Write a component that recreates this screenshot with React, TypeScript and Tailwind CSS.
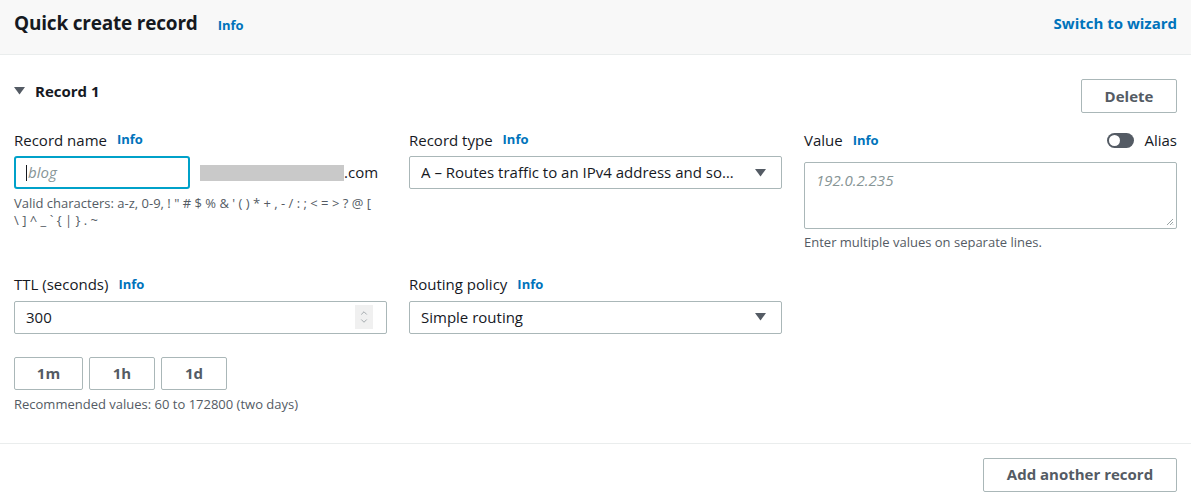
import { ChevronUp, ChevronDown } from 'lucide-react';

function Info() {
  return <span className="ml-[10px] text-[13px] font-bold text-[#0073bb]">Info</span>;
}

function Caret({ className = '' }: { className?: string }) {
  return (
    <svg width="11" height="8" viewBox="0 0 11 8" className={className}>
      <path d="M0 0h11L5.5 7.5z" fill="#545b64" />
    </svg>
  );
}

function Label({ text }: { text: string }) {
  return (
    <div className="flex items-center h-[22px] text-[15px] text-[#16191f]">
      {text}
      <Info />
    </div>
  );
}

function Select({ value }: { value: string }) {
  return (
    <div className="flex items-center justify-between h-[33px] border border-[#aab7b8] rounded-[2px] pl-[11px] pr-[15px] text-[15px] text-[#16191f] bg-white">
      <span className="truncate">{value}</span>
      <Caret className="ml-4 shrink-0" />
    </div>
  );
}

function SmallButton({ label, width }: { label: string; width: string }) {
  return (
    <button className={`${width} h-[33px] border border-[#aab7b8] rounded-[2px] text-[15px] font-bold text-[#545b64] bg-white`}>
      {label}
    </button>
  );
}

export default function App() {
  return (
    <div className="w-[1191px] h-[501px] bg-white font-['Open_Sans',sans-serif] overflow-hidden">
      {/* Header */}
      <header className="h-[55px] bg-[#f8f8f8] border-b border-[#eaeded] px-[14px] flex items-center justify-between">
        <div className="flex items-baseline pb-[7px]">
          <h1 className="text-[19px] font-bold text-[#16191f] tracking-[-0.2px]">Quick create record</h1>
          <span className="ml-[20px] text-[13px] font-bold text-[#0073bb]">Info</span>
        </div>
        <a className="pb-[8px] text-[15px] font-bold text-[#0073bb]">Switch to wizard</a>
      </header>

      {/* Record section */}
      <section className="px-[14px] pt-[24px]">
        <div className="flex items-start justify-between">
          <div className="flex items-center h-[22px] mt-[1px]">
            <svg width="11" height="8" viewBox="0 0 11 8" className="mr-[10px]">
              <path d="M0 0h11L5.5 7.5z" fill="#545b64" />
            </svg>
            <span className="text-[15px] font-bold text-[#16191f]">Record 1</span>
          </div>
          <button className="w-[96px] h-[34px] border border-[#aab7b8] rounded-[2px] text-[15px] font-bold text-[#545b64] bg-white">
            Delete
          </button>
        </div>

        {/* Row 1 */}
        <div className="grid grid-cols-3 gap-x-[22px] mt-[16px]">
          <div>
            <Label text="Record name" />
            <div className="flex items-center mt-[5px]">
              <div className="w-[176px] h-[33px] border-2 border-[#00a1c9] rounded-[3px] flex items-center pl-[10px] text-[15px] italic text-[#879596]">
                <span className="w-px h-[16px] bg-[#16191f] mr-[1px]" />
                blog
              </div>
              <div className="ml-[10px] w-[144px] h-[16px] bg-[#c9c9c9]" />
              <span className="text-[15px] text-[#16191f]">.com</span>
            </div>
            <p className="mt-[6px] text-[13px] leading-[17px] text-[#545b64]">
              Valid characters: a-z, 0-9, ! " # $ % &amp; ' ( ) * + , - / : ; &lt; = &gt; ? @ [
              <br />
              \ ] ^ _ ` {'{'} | {'}'} . ~
            </p>
          </div>
          <div>
            <Label text="Record type" />
            <div className="mt-[5px]">
              <Select value="A – Routes traffic to an IPv4 address and some AWS resources" />
            </div>
          </div>
          <div>
            <div className="flex items-center justify-between">
              <Label text="Value" />
              <div className="flex items-center">
                <div className="w-[27px] h-[15px] rounded-full bg-[#545b64] flex items-center pl-[2px]">
                  <div className="w-[11px] h-[11px] rounded-full bg-white" />
                </div>
                <span className="ml-[10px] text-[15px] text-[#16191f]">Alias</span>
              </div>
            </div>
            <div className="relative mt-[10px] h-[67px] border border-[#aab7b8] rounded-[2px] px-[11px] pt-[6px] text-[15px] italic text-[#879596]">
              192.0.2.235
              <svg width="8" height="8" viewBox="0 0 8 8" className="absolute right-[2px] bottom-[2px]">
                <path d="M7 1L1 7M7 4L4 7M7 6.5L6.5 7" stroke="#9aa4a5" strokeWidth="1" />
              </svg>
            </div>
            <p className="mt-[5px] text-[13px] leading-[17px] text-[#545b64]">
              Enter multiple values on separate lines.
            </p>
          </div>
        </div>

        {/* Row 2 */}
        <div className="grid grid-cols-3 gap-x-[22px] mt-[23px]">
          <div>
            <Label text="TTL (seconds)" />
            <div className="mt-[5px] h-[33px] border border-[#aab7b8] rounded-[2px] flex items-center justify-between pl-[11px] pr-[13px] text-[15px] text-[#16191f]">
              <span>300</span>
              <div className="w-[18px] h-[24px] bg-[#f0f0f0] flex flex-col items-center justify-center text-[#7d868c]">
                <ChevronUp size={10} strokeWidth={1.6} className="-mb-[1px]" />
                <ChevronDown size={10} strokeWidth={1.6} className="-mt-[1px]" />
              </div>
            </div>
            <div className="flex gap-[6px] mt-[23px]">
              <SmallButton label="1m" width="w-[69px]" />
              <SmallButton label="1h" width="w-[66px]" />
              <SmallButton label="1d" width="w-[66px]" />
            </div>
            <p className="mt-[6px] text-[13px] leading-[17px] text-[#545b64]">
              Recommended values: 60 to 172800 (two days)
            </p>
          </div>
          <div>
            <Label text="Routing policy" />
            <div className="mt-[5px]">
              <Select value="Simple routing" />
            </div>
          </div>
          <div />
        </div>
      </section>

      {/* Footer */}
      <div className="mt-[30px] border-t border-[#eaeded] px-[14px] pt-[14px] flex justify-end">
        <button className="w-[194px] h-[34px] border border-[#aab7b8] rounded-[2px] text-[15px] font-bold text-[#545b64] bg-white">
          Add another record
        </button>
      </div>
    </div>
  );
}
